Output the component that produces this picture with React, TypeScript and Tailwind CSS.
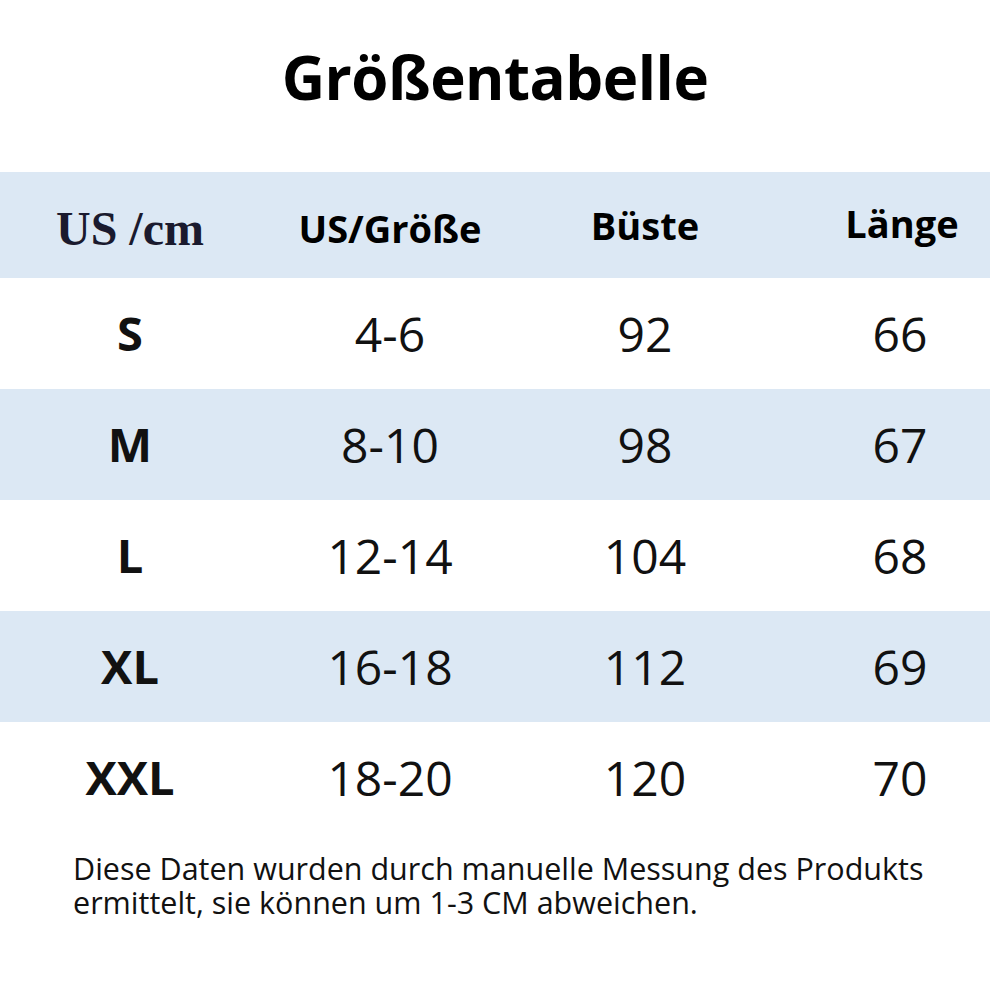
const rows = [
  { size: 'S', us: '4-6', bust: '92', length: '66' },
  { size: 'M', us: '8-10', bust: '98', length: '67' },
  { size: 'L', us: '12-14', bust: '104', length: '68' },
  { size: 'XL', us: '16-18', bust: '112', length: '69' },
  { size: 'XXL', us: '18-20', bust: '120', length: '70' },
];

const sans = "font-['Open_Sans','Noto_Sans',sans-serif]";

const App = () => (
  <div className={`w-[990px] h-[990px] bg-white text-[#111] ${sans}`}>
    <div className="h-[172px] flex items-center justify-center pb-[18px]">
      <h1 className="text-[60px] font-bold tracking-[-0.5px] text-black">Größentabelle</h1>
    </div>

    {/* header row */}
    <div className="h-[106px] bg-[#dce8f4] grid grid-cols-[260px_260px_250px_220px] items-center text-center">
      <div className="font-['Liberation_Serif',serif] font-bold text-[48px] text-[#1a1a2e] pt-[8px]">US /cm</div>
      <div className="font-bold text-[38px] text-black pt-[6px]">US/Größe</div>
      <div className="font-bold text-[38px] text-black">Büste</div>
      <div className="font-bold text-[38px] text-black pl-[44px] pb-[4px]">Länge</div>
    </div>

    {rows.map((row, i) => (
      <div
        key={row.size}
        className={`h-[111px] grid grid-cols-[260px_260px_250px_220px] items-center text-center text-[48px] ${
          i % 2 === 1 ? 'bg-[#dce8f4]' : 'bg-white'
        }`}
      >
        <div className="font-bold text-[47px]">{row.size}</div>
        <div>{row.us}</div>
        <div>{row.bust}</div>
        <div className="pl-[40px]">{row.length}</div>
      </div>
    ))}

    <div className="pl-[73px] pt-[18px] text-[30.5px] leading-[34px] text-[#111]">
      <p>Diese Daten wurden durch manuelle Messung des Produkts</p>
      <p>ermittelt, sie können um 1-3 CM abweichen.</p>
    </div>
  </div>
);

export default App;
